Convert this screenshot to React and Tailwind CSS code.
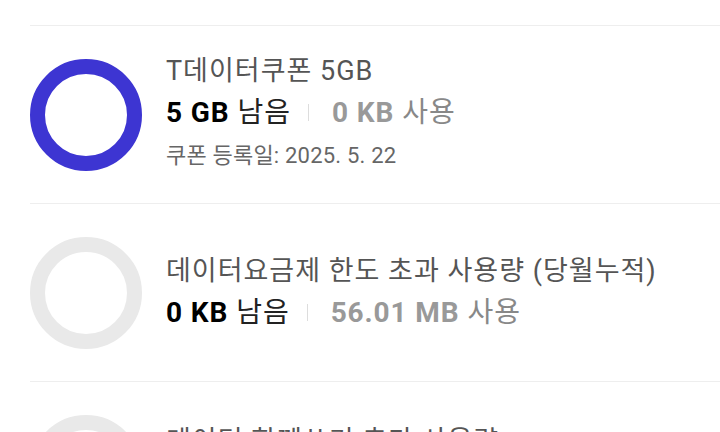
import React from 'react';

const rows = [
  {
    title: 'T데이터쿠폰 5GB',
    left: '5 GB',
    used: '0 KB',
    date: '쿠폰 등록일: 2025. 5. 22',
    active: true,
  },
  {
    title: '데이터요금제 한도 초과 사용량 (당월누적)',
    left: '0 KB',
    used: '56.01 MB',
    active: false,
  },
  {
    title: '데이터 함께쓰기 추가 사용량',
    left: '0 KB',
    used: '0 KB',
    note: '매월 1일 초기화',
    active: false,
  },
];

const Ring = ({ active }) => (
  <div
    className={`w-[112px] h-[112px] shrink-0 rounded-full border-[15px] ${
      active ? 'border-[#3d35d2]' : 'border-[#e9e9e9]'
    }`}
  ></div>
);

export default function App() {
  return (
    <div
      className="w-[720px] h-[432px] overflow-hidden bg-white"
      style={{ fontFamily: "Roboto, 'Noto Sans CJK KR', sans-serif" }}
    >
      {/* end of the previous item */}
      <div className="h-[25px]"></div>

      <div className="ml-[30px]">
        {rows.map((row, i) => (
          <div
            key={i}
            className="flex items-center min-h-[178px] border-t border-[#eeeeee]"
          >
            <Ring active={row.active} />
            <div className="ml-[24px] flex flex-col">
              <p className="text-[27px] leading-[40px] tracking-[1px] text-[#555555]">{row.title}</p>
              <div className="flex items-center text-[28px] leading-[43px] tracking-[0.9px]">
                <span className="font-bold text-black">{row.left}</span>
                <span className="ml-[8px] text-[#222222]">남음</span>
                <span className="ml-[17px] mr-[23px] w-px h-[17px] bg-[#dddddd]"></span>
                <span className="font-bold text-[#999999]">{row.used}</span>
                <span className="ml-[8px] text-[#888888]">사용</span>
              </div>
              {row.date && (
                <p className="text-[22px] leading-[44px] tracking-[0.2px] text-[#666666]">{row.date}</p>
              )}
              {row.note && (
                <p className="text-[22px] leading-[16px] text-[#666666]">{row.note}</p>
              )}
            </div>
          </div>
        ))}
      </div>
    </div>
  );
}
